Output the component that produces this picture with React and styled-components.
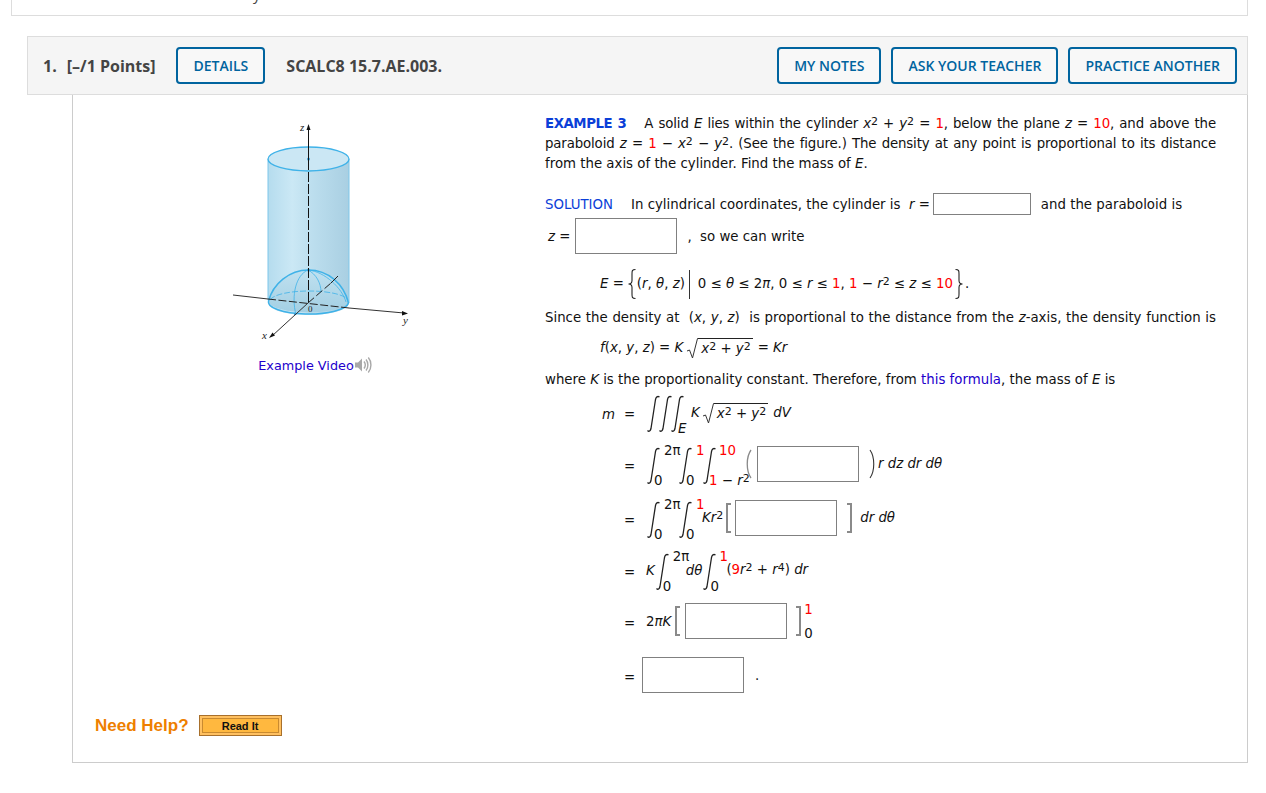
import React from "react";
import styled, { createGlobalStyle } from "styled-components";

const GlobalStyle = createGlobalStyle`
  html, body { margin: 0; padding: 0; background: #fff; }
  body { font-family: "DejaVu Sans", Verdana, sans-serif; font-size: 13px; color: #111; }
`;

const Page = styled.div`
  padding: 0 18px 0 11px;
  height: 793px;
  box-sizing: border-box;
  overflow: hidden;
`;

const TopCard = styled.div`
  height: 16px;
  box-sizing: border-box;
  border: 1px solid #ddd;
  border-top: none;
  overflow: hidden;
  font-family: "Open Sans", sans-serif;
  font-size: 15px;
  line-height: 20px;
  color: #444;
  padding-left: 241px;
`;

const TopClip = styled.div`
  margin-top: -16px;
`;

const Question = styled.section`
  margin: 20px 0 0 16px;
`;

const Header = styled.header`
  display: flex;
  align-items: center;
  gap: 21px;
  height: 59px;
  box-sizing: border-box;
  padding: 0 10px 0 15px;
  background: #f5f5f5;
  border: 1px solid #ddd;
  font-family: "Open Sans", sans-serif;
  font-size: 16px;
  font-weight: 700;
  color: #444;
`;

const QuestionNumber = styled.span`
  margin-right: 10px;
`;

const Actions = styled.div`
  display: flex;
  gap: 10px;
  margin-left: auto;
`;

const HeadButton = styled.button`
  height: 37px;
  padding: 0 15px;
  background: #f8f8f8;
  border: 2px solid #00649f;
  border-radius: 4px;
  font-family: "Open Sans", sans-serif;
  font-size: 14px;
  font-weight: 600;
  color: #00649f;
`;

const Body = styled.div`
  display: grid;
  grid-template-columns: 472px 671px;
  height: 668px;
  box-sizing: border-box;
  margin-left: 45px;
  border: 1px solid #ccc;
  border-top: none;
`;

const FigureColumn = styled.div`
  display: flex;
  flex-direction: column;
  align-items: center;
  padding: 18px 0 26px;
  box-sizing: border-box;
`;

const Figure = styled.svg`
  display: block;
  width: 220px;
  height: 237px;
`;

const VideoLine = styled.div`
  display: flex;
  align-items: center;
  height: 30px;
  padding-left: 13px;
  font-size: 12.8px;
`;

const Link = styled.span`
  color: #2200cc;
`;

const HelpRow = styled.div`
  display: flex;
  align-items: center;
  gap: 10px;
  align-self: flex-start;
  margin-top: auto;
  padding-left: 22px;
`;

const HelpLabel = styled.span`
  font-family: "Liberation Sans", Arial, sans-serif;
  font-size: 17px;
  font-weight: 700;
  color: #ee7f00;
`;

const ReadIt = styled.button`
  width: 83px;
  height: 21px;
  padding: 0;
  background: linear-gradient(#f6d9a8 0, #f6d9a8 3px, #ffb83f 3px);
  border: 1px solid #a8702c;
  box-shadow: inset 0 0 0 2px #ffc060, inset 0 0 0 3px #c98a30;
  font-family: "Liberation Sans", Arial, sans-serif;
  font-size: 11px;
  font-weight: 700;
  color: #111;
`;

const Content = styled.div`
  padding-top: 19px;
  line-height: 20px;
  font-size: 13.33px;
`;

const Justified = styled.div`
  text-align: justify;
  text-align-last: ${(p) => (p.$last ? "left" : "justify")};
  letter-spacing: ${(p) => (p.$tight ? "-0.14px" : "0")};
  height: 20px;
  margin-top: ${(p) => p.$mt || 0}px;
`;

const Line = styled.div`
  display: flex;
  align-items: center;
  white-space: pre;
  height: ${(p) => p.$h || 20}px;
  margin-top: ${(p) => p.$mt || 0}px;
  padding-left: ${(p) => p.$indent || 0}px;
`;

const BlueHead = styled.span`
  color: #0b3fd8;
  font-weight: ${(p) => (p.$bold ? 700 : 400)};
  letter-spacing: ${(p) => (p.$bold ? "-0.45px" : "0")};
  margin-right: ${(p) => p.$mr || 0}px;
`;

const I = styled.i`
  font-style: italic;
`;

const Red = styled.span`
  color: #f00;
`;

const Sup = styled.sup`
  font-size: 11px;
  line-height: 0;
  vertical-align: 3px;
`;

const Answer = styled.input`
  box-sizing: border-box;
  width: ${(p) => p.$w || 102}px;
  height: ${(p) => p.$h || 36}px;
  margin: -2px ${(p) => p.$mr || 0}px 0 ${(p) => p.$ml || 0}px;
  padding: 0;
  background: #fff;
  border: 1px solid #808080;
  outline: none;
  flex: none;
`;

const BraceIcon = styled.svg`
  flex: none;
  width: 10px;
  height: 32px;
  margin: 0 ${(p) => p.$mr || 0}px 0 ${(p) => p.$ml || 0}px;
`;

const SuchThat = styled.span`
  flex: none;
  width: 1px;
  height: 29px;
  background: #333;
  margin: 0 8px 0 4px;
`;

const RootWrap = styled.span`
  display: inline-flex;
  align-items: flex-end;
  margin: 0 ${(p) => p.$mr || 0}px 0 ${(p) => p.$ml || 1}px;
`;

const RootBody = styled.span`
  border-top: 1px solid #222;
  line-height: 20px;
  padding: 0 2px 0 3px;
`;

const EqSign = styled.span`
  flex: none;
  width: ${(p) => p.$w || 22}px;
  margin-top: 3px;
`;

const Lhs = styled.span`
  flex: none;
  width: 24px;
  padding-left: 2px;
  box-sizing: border-box;
  margin-top: 3px;
`;

const IntegralBox = styled.span`
  flex: none;
  display: grid;
  grid-template-rows: 1fr 1fr;
  grid-template-columns: 1fr;
  width: ${(p) => p.$w}px;
  height: 44px;
  margin-top: 2px;
  line-height: 14px;
`;

const IntegralSign = styled.svg`
  grid-area: 1 / 1 / 3 / 2;
  width: 15px;
  height: 38px;
  align-self: center;
`;

const Upper = styled.span`
  grid-area: 1 / 1;
  align-self: start;
  padding-left: ${(p) => p.$x || 18}px;
`;

const Lower = styled.span`
  grid-area: 2 / 1;
  align-self: end;
  padding-left: ${(p) => p.$x || 8}px;
`;

const Bracket = styled.span`
  flex: none;
  box-sizing: border-box;
  width: 5px;
  height: 30px;
  margin: -2px ${(p) => p.$mr || 0}px 0 ${(p) => p.$ml || 0}px;
  border: 2px solid #8a8a8a;
  border-${(p) => (p.$close ? "left" : "right")}: none;
`;

const Bounds = styled.span`
  flex: none;
  display: flex;
  flex-direction: column;
  justify-content: space-between;
  height: 38px;
  margin-left: 3px;
  line-height: 14px;
`;

const Paren = styled.svg`
  flex: none;
  width: 7px;
  height: 30px;
  margin: -2px ${(p) => p.$mr || 0}px 0 ${(p) => p.$ml || 0}px;
`;

const Trailing = styled.span`
  margin-bottom: ${(p) => p.$up || 0}px;
`;

const Spaced = styled.span`
  margin-left: ${(p) => p.$ml || 0}px;
`;

const Integral = ({ w, up, low, upX, lowX }) => (
  <IntegralBox $w={w}>
    <IntegralSign viewBox="0 0 15 38">
      <path d="M1.5 35.5c1.5 1.5 3 .5 3.500-2L9.500 4.500C10 2 11.500 .8 13.500 2" fill="none" stroke="#222" strokeWidth="1.300" />
    </IntegralSign>
    {up && <Upper $x={upX}>{up}</Upper>}
    {low && <Lower $x={lowX}>{low}</Lower>}
  </IntegralBox>
);

const Sqrt = ({ children, ml, mr }) => (
  <RootWrap $ml={ml} $mr={mr}>
    <svg width="12" height="21" viewBox="0 0 12 21">
      <path d="M1 13l2.500-1 3 8L11.500 .5H12" fill="none" stroke="#333" strokeWidth="1" />
    </svg>
    <RootBody>{children}</RootBody>
  </RootWrap>
);

const Speaker = () => (
  <svg width="19" height="20" viewBox="0 0 19 20">
    <path d="M1 7.500h3L8 3.500v13l-4-4H1z" fill="#a8a8a8" />
    <g fill="none" stroke="#a8a8a8" strokeWidth="1.400">
      <path d="M10 6.500c1.500 2 1.500 5 0 7" />
      <path d="M12 4.500c2.500 3 2.500 8 0 11" />
      <path d="M14.300 2.500c3.500 4 3.500 11 0 15" />
    </g>
  </svg>
);

const CylinderFigure = () => (
  <Figure viewBox="199 113 220 237">
    <defs>
      <linearGradient id="wall" x1="0" x2="1" y1="0" y2="0">
        <stop offset="0" stopColor="#b5dcee" />
        <stop offset="0.3" stopColor="#cbe8f5" />
        <stop offset="0.55" stopColor="#bcdeee" />
        <stop offset="1" stopColor="#a9cfe2" />
      </linearGradient>
      <linearGradient id="dome" x1="0" x2="0" y1="0" y2="1">
        <stop offset="0" stopColor="#c0e1f0" />
        <stop offset="1" stopColor="#a3cfe3" />
      </linearGradient>
    </defs>
    <path d="M268 159V303a40.500 12 0 0 0 81 0V159z" fill="url(#wall)" stroke="none" />
    <path d="M268 159V300M349 159V303" stroke="#7cc6ea" strokeWidth="1" />
    <ellipse cx="308.500" cy="159" rx="40.500" ry="12" fill="#cbe7f4" stroke="#3fb2e8" strokeWidth="1.300" />
    <path d="M268.500 301C273 284 289 270 308.500 270S344 284 348.500 303a40.500 12 0 0 1 -80 -2z" fill="url(#dome)" />
    <path d="M268.500 301a40 12 0 0 0 80 2" fill="none" stroke="#3fb2e8" strokeWidth="1.500" />
    <path d="M268.500 301C273 284 289 270 308.500 270S344 284 348.500 303" fill="none" stroke="#3fb2e8" strokeWidth="1.500" />
    <path d="M308.500 270C325 272 342 288 346 302" fill="none" stroke="#3fb2e8" strokeWidth="0.800" />
    <path d="M270 300c8-12 70-12 78 0" fill="none" stroke="#3fb2e8" strokeWidth="0.800" strokeDasharray="6 2" />
    <path d="M308 270C296 275 291 295 296 315" fill="none" stroke="#3fb2e8" strokeWidth="0.800" />
    <path d="M308 270c8 4 13 13 13 22" fill="none" stroke="#3fb2e8" strokeWidth="0.800" />
    <circle cx="308.500" cy="159" r="1.500" fill="#3fa2d8" />
    <circle cx="308.500" cy="270" r="1.500" fill="#3fa2d8" />
    <circle cx="295" cy="314" r="1.200" fill="#3fa2d8" />
    <path d="M308.500 128V160" stroke="#111" strokeWidth="1" />
    <path d="M308.500 160V302" stroke="#111" strokeWidth="1" strokeDasharray="10 2" />
    <path d="M308.500 124l-2 6h4z" fill="#111" />
    <path d="M233 295L268 299" stroke="#333" strokeWidth="1" />
    <path d="M268 299L349 308" stroke="#222" strokeWidth="1" strokeDasharray="8 2.500" />
    <path d="M349 308L404 313" stroke="#333" strokeWidth="1" />
    <path d="M408 313.500l-6-2.500v4.500z" fill="#111" />
    <path d="M272 336L308 303" stroke="#333" strokeWidth="1" />
    <path d="M308 303L331 283" stroke="#222" strokeWidth="1" strokeDasharray="8 3" />
    <path d="M331 283L338 276" stroke="#222" strokeWidth="1" />
    <path d="M269 338l6-2.500-2.500-3z" fill="#111" />
    <g fontFamily="'Liberation Serif', serif" fontSize="11" fontStyle="italic" fill="#222">
      <text x="300" y="131">z</text>
      <text x="403" y="324">y</text>
      <text x="262" y="339">x</text>
    </g>
    <text x="308" y="312" fontFamily="'Liberation Serif', serif" fontSize="9" fill="#222">0</text>
  </Figure>
);

const App = () => (
  <Page>
    <GlobalStyle />
    <TopCard>
      <TopClip>y</TopClip>
    </TopCard>
    <Question>
      <Header>
        <span><QuestionNumber>1.</QuestionNumber>[–/1 Points]</span>
        <HeadButton>DETAILS</HeadButton>
        <span>SCALC8 15.7.AE.003.</span>
        <Actions>
          <HeadButton>MY NOTES</HeadButton>
          <HeadButton>ASK YOUR TEACHER</HeadButton>
          <HeadButton>PRACTICE ANOTHER</HeadButton>
        </Actions>
      </Header>
      <Body>
        <FigureColumn>
          <CylinderFigure />
          <VideoLine>
            <Link>Example Video</Link>
            <Speaker />
          </VideoLine>
          <HelpRow>
            <HelpLabel>Need Help?</HelpLabel>
            <ReadIt>Read It</ReadIt>
          </HelpRow>
        </FigureColumn>
        <Content>
          <Justified $tight>
            <BlueHead $bold $mr={18}>EXAMPLE 3</BlueHead>
            A solid <I>E</I> lies within the cylinder <I>x</I><Sup>2</Sup> + <I>y</I><Sup>2</Sup> = <Red>1</Red>, below the plane <I>z</I> = <Red>10</Red>, and above the
          </Justified>
          <Justified $tight>
            paraboloid <I>z</I> = <Red>1</Red> − <I>x</I><Sup>2</Sup> − <I>y</I><Sup>2</Sup>. (See the figure.) The density at any point is proportional to its distance
          </Justified>
          <Justified $last>
            from the axis of the cylinder. Find the mass of <I>E</I>.
          </Justified>

          <Line $h={22} $mt={20}>
            <BlueHead $mr={18}>SOLUTION</BlueHead>
            In cylindrical coordinates, the cylinder is &nbsp;<I>r</I> =
            <Answer $w={98} $h={22} $ml={3} $mr={10} />
            and the paraboloid is
          </Line>
          <Line $h={36} $mt={3} $indent={3}>
            <I>z</I> =
            <Answer $ml={5} $mr={10} />
            , &nbsp;so we can write
          </Line>
          <Line $h={40} $mt={9} $indent={55}>
            <I>E</I> =
            <BraceIcon viewBox="0 0 10 32" $ml={3}>
              <path d="M8.500 1.500C5 1.500 5 3 5 6v6.500c0 2-1 3.500-3.500 3.500C4 16 5 17.500 5 19.500V26c0 3 0 4.500 3.500 4.500" fill="none" stroke="#222" strokeWidth="1.100" />
            </BraceIcon>
            <span>(<I>r</I>, <I>θ</I>, <I>z</I>)</span>
            <SuchThat />
            <span>0 ≤ <I>θ</I> ≤ 2<I>π</I>, 0 ≤ <I>r</I> ≤ <Red>1</Red>, <Red>1</Red> − <I>r</I><Sup>2</Sup> ≤ <I>z</I> ≤ <Red>10</Red></span>
            <BraceIcon viewBox="0 0 10 32" $ml={1} $mr={1}>
              <path d="M1.500 1.500C5 1.500 5 3 5 6v6.500c0 2 1 3.500 3.500 3.500C6 16 5 17.500 5 19.500V26c0 3 0 4.500-3.500 4.500" fill="none" stroke="#222" strokeWidth="1.100" />
            </BraceIcon>
            .
          </Line>
          <Justified $mt={4}>
            Since the density at &nbsp;(<I>x</I>, <I>y</I>, <I>z</I>)&nbsp; is proportional to the distance from the <I>z</I>-axis, the density function is
          </Justified>
          <Line $h={30} $mt={5} $indent={55}>
            <I>f</I>(<I>x</I>, <I>y</I>, <I>z</I>) = <I>K</I>
            <Sqrt ml={3} mr={5}><I>x</I><Sup>2</Sup> + <I>y</I><Sup>2</Sup></Sqrt>
            = <I>Kr</I>
          </Line>
          <Line $mt={7}>
            where <I>K</I> is the proportionality constant. Therefore, from <Link>this formula</Link>, the mass of <I>E</I> is
          </Line>
          <Line $h={40} $mt={3} $indent={55}>
            <Lhs><I>m</I></Lhs>
            <EqSign>=</EqSign>
            <Integral w={12} />
            <Integral w={12} />
            <Integral w={21} low={<I>E</I>} lowX={8} />
            <I>K</I>
            <Sqrt ml={2} mr={5}><I>x</I><Sup>2</Sup> + <I>y</I><Sup>2</Sup></Sqrt>
            <I>dV</I>
          </Line>

          <Line $h={44} $mt={10} $indent={79}>
            <EqSign>=</EqSign>
            <Integral w={32} up="2π" low="0" />
            <Integral w={24} up={<Red>1</Red>} low="0" />
            <Integral w={43} up={<Red>10</Red>} low={<><Red>1</Red> − <I>r</I><Sup>2</Sup></>} upX={17} lowX={7} />
            <Paren viewBox="0 0 7 30" $mr={5}>
              <path d="M6 1C1 8 1 22 6 29" fill="none" stroke="#8a8a8a" strokeWidth="1.300" />
            </Paren>
            <Answer $mr={10} />
            <Paren viewBox="0 0 7 30" $mr={2}>
              <path d="M1 1C6 8 6 22 1 29" fill="none" stroke="#333" strokeWidth="1.100" />
            </Paren>
            <Trailing $up={3}><I>r dz dr dθ</I></Trailing>
          </Line>
          <Line $h={44} $mt={10} $indent={79}>
            <EqSign>=</EqSign>
            <Integral w={32} up="2π" low="0" />
            <Integral w={24} up={<Red>1</Red>} low="0" />
            <Trailing $up={3}><I>Kr</I><Sup>2</Sup></Trailing>
            <Bracket $ml={3} $mr={4} />
            <Answer $mr={10} />
            <Bracket $close $mr={8} />
            <Trailing $up={3}><I>dr dθ</I></Trailing>
          </Line>
          <Line $h={44} $mt={8} $indent={79}>
            <EqSign>=</EqSign>
            <I>K</I>
            <Integral w={31} up="2π" low="0" />
            <Trailing $up={1}><I>dθ</I></Trailing>
            <Integral w={24} up={<Red>1</Red>} low="0" upX={17} />
            <Trailing $up={2}>(<Red>9</Red><I>r</I><Sup>2</Sup> + <I>r</I><Sup>4</Sup>) <I>dr</I></Trailing>
          </Line>
          <Line $h={44} $mt={7} $indent={79}>
            <EqSign>=</EqSign>
            2<I>π</I><I>K</I>
            <Bracket $ml={4} $mr={5} />
            <Answer $mr={9} />
            <Bracket $close />
            <Bounds><Red>1</Red><span>0</span></Bounds>
          </Line>
          <Line $h={44} $mt={10} $indent={79}>
            <EqSign $w={18}>=</EqSign>
            <Answer />
            <Spaced $ml={11}>.</Spaced>
          </Line>
        </Content>
      </Body>
    </Question>
  </Page>
);

export default App;
